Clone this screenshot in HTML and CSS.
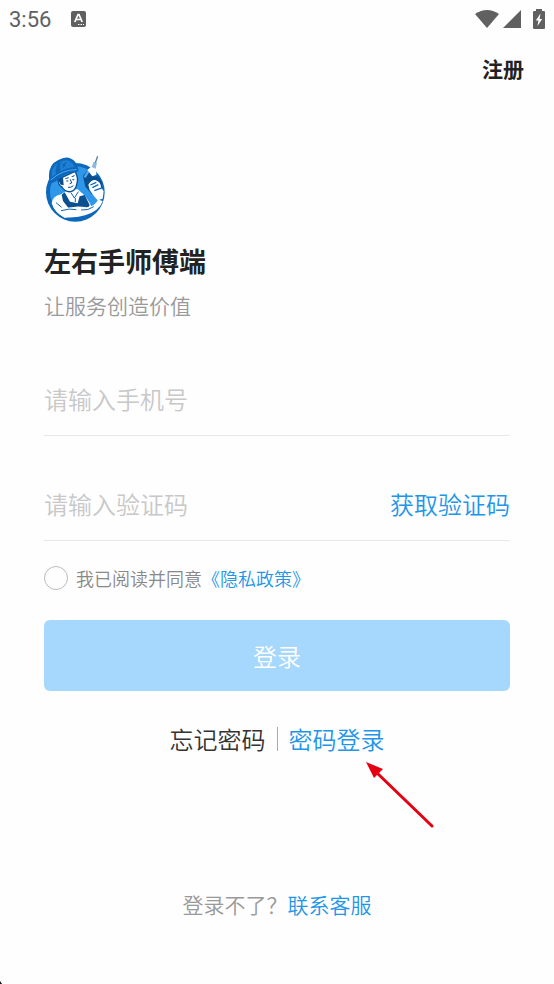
FILE: index.html
```html
<!DOCTYPE html>
<html lang="zh-CN">

<head>
    <meta charset="UTF-8">
    <meta name="viewport" content="width=device-width, initial-scale=1.0">
    <title>登录</title>
    <link rel="stylesheet" href="styles.css">
</head>

<body>
    <div class="status-bar">
        <span class="time">3:56</span>
        <svg class="app-icon" width="15" height="16" viewBox="0 0 15 16">
            <rect width="15" height="16" rx="2" fill="#606060" />
            <path d="M3.8 11 L7 3.6 H8 L11.2 11 M5.2 8.5 H9.8" fill="none" stroke="#fff" stroke-width="1.7" />
            <path d="M7 13.5 H8.5 M9.5 13.5 H11 M12 13.5 H13" stroke="#fff" stroke-width="1.2" />
        </svg>
        <div class="status-icons">
            <svg width="24" height="18" viewBox="0 0 24 18">
                <path d="M0 4 Q12 -4 24 4 L12 18 Z" fill="#606060" />
            </svg>
            <svg width="18" height="18" viewBox="0 0 18 18">
                <path d="M18 0 V18 H0 Z" fill="#606060" />
            </svg>
            <svg class="battery" width="12" height="20" viewBox="0 0 12 20">
                <path d="M3 2 V0 H9 V2 H11 Q12 2 12 3 V19 Q12 20 11 20 H1 Q0 20 0 19 V3 Q0 2 1 2 Z" fill="#606060" />
                <path d="M7.5 4.5 L2.8 11.5 H5.4 L4.5 17 L9.2 10 H6.6 Z" fill="#fff" />
            </svg>
        </div>
    </div>

    <header class="top">
        <a class="register" href="#">注册</a>
    </header>

    <main class="login">
        <svg class="logo" width="62" height="66" viewBox="27 18 186 198" role="img" aria-label="左右手师傅端">
            <circle cx="121" cy="127" r="88" fill="#0d68bb" />
            <circle cx="121" cy="125" r="76" fill="#2f97ea" />
            <!-- 身体 -->
            <path d="M50 160 Q52 139 78 133 L98 120 L128 118 L150 137 L164 158 L172 176 L130 184 L90 204 Q58 188 50 160 Z" fill="#fff" />
            <path d="M80 134 L89 127 L105 155 L128 160 L134 139 L149 135 L164 165 L157 178 L108 184 L84 153 Z" fill="#0a4f8f" />
            <path d="M76 180 Q115 164 155 172 Q180 170 190 148 L203 154 Q192 184 150 196 Q112 206 84 201 Z" fill="#fff" />
            <path d="M78 182 Q104 174 124 179 M138 180 Q160 182 176 170 M63 158 L80 172 M108 128 L118 144 L130 125 M121 144 V156" fill="none" stroke="#0d68bb" stroke-width="3" />
            <!-- 头部 -->
            <path d="M69 88 L120 64 Q132 84 125 104 Q121 122 107 125 Q90 127 81 111 Q70 108 69 88 Z" fill="#fff" stroke="#0a4f8f" stroke-width="4" />
            <path d="M68 87 L84 82 L86 106 L77 104 Z" fill="#0a4f8f" />
            <path d="M91 86 L101 83 M110 80 L119 77 M94 93 H100 M112 89 H118 M106 88 L110 99 L104 101 M99 112 Q108 114 115 107" fill="none" stroke="#0a4f8f" stroke-width="3" />
            <path d="M43 94 Q36 45 70 30 Q100 12 121 36 L128 52 Q136 67 121 67 Q100 66 68 89 Q48 106 43 94 Z" fill="#0d68bb" />
            <path d="M50 80 Q48 52 68 38 Q60 58 63 73 Z M76 36 Q98 24 112 40 L119 52 Q98 52 76 64 Z" fill="#1d80d4" />
            <path d="M47 90 Q83 58 125 59" fill="none" stroke="#4fa8f2" stroke-width="3" />
            <path d="M82 41 L92 49 M93 36 L83 53" stroke="#0d5ca6" stroke-width="3" />
            <!-- 电钻 -->
            <path d="M144 78 L160 56 L174 78 L190 80 L202 100 L199 116 L170 132 L151 110 Z" fill="#0a4f8f" />
            <path d="M146 80 L158 60 L163 66 L152 84 Z" fill="#4fa8f2" />
            <path d="M157 60 L170 49 L184 58 L184 74 L172 79 Z" fill="#fff" />
            <path d="M170 51 L176 35 L186 38 L182 56 Z" fill="#8fb9de" />
            <path d="M181 38 L188 19" stroke="#5b7f9f" stroke-width="4" />
            <path d="M160 104 Q168 89 181 90 Q198 96 198 112 L206 124 L203 146 L188 151 L176 137 L164 120 Z" fill="#fff" />
            <path d="M166 105 L184 97 M172 113 L190 104 M178 122 L203 113" stroke="#0d68bb" stroke-width="4" />
        </svg>
        <h1 class="title">左右手师傅端</h1>
        <p class="slogan">让服务创造价值</p>

        <form class="form">
            <div class="field">
                <input type="tel" placeholder="请输入手机号" aria-label="手机号">
            </div>
            <div class="field">
                <input type="text" placeholder="请输入验证码" aria-label="验证码">
                <button class="get-code" type="button">获取验证码</button>
            </div>
            <div class="agree">
                <input type="checkbox" id="agree">
                <label for="agree">我已阅读并同意</label>
                <a href="#">《隐私政策》</a>
            </div>
            <button class="submit" type="submit">登录</button>
        </form>

        <div class="links">
            <a class="forgot" href="#">忘记密码</a>
            <span class="divider"></span>
            <a class="password-login" href="#">密码登录</a>
            <svg class="arrow" width="70" height="68" viewBox="0 0 70 68">
                <path d="M10 10 L66 64" stroke="#e60012" stroke-width="3" stroke-linecap="round" />
                <path d="M0 0 L17 7 L8 16 Z" fill="#e60012" />
            </svg>
        </div>
    </main>

    <footer class="help">
        <span>登录不了？</span><a href="#">联系客服</a>
    </footer>
    <svg class="corner" width="2" height="3" viewBox="0 0 2 3">
        <path d="M0 0 L2 3 H0 Z" fill="#111" />
    </svg>
</body>

</html>
```

FILE: styles.css
```css
* {
    margin: 0;
    padding: 0;
    box-sizing: border-box;
}

body {
    background-color: #fefefe;
    color: #222;
    font-family: "Noto Sans CJK SC", sans-serif;
    font-weight: 350;
}

a {
    color: #2196e8;
    text-decoration: none;
}

input,
button {
    border: none;
    outline: none;
    background: none;
    font-family: inherit;
    font-weight: inherit;
}

svg {
    display: block;
}

.status-bar {
    display: flex;
    align-items: center;
    height: 38px;
    padding: 0 9px;
}

.time {
    color: #606060;
    font-family: Roboto, sans-serif;
    font-size: 22px;
    font-weight: 400;
}

.app-icon {
    margin-left: 20px;
}

.status-icons {
    display: flex;
    align-items: center;
    gap: 4px;
    margin-left: auto;
}

.battery {
    margin-left: 8px;
}

.top {
    display: flex;
    justify-content: flex-end;
    padding: 14px 30px 0;
}

.register {
    color: #222;
    font-size: 21px;
    font-weight: 700;
    line-height: 32px;
}

.login {
    padding: 72px 44px 0;
}

.title {
    margin-top: 21px;
    font-size: 27px;
    font-weight: 700;
    line-height: 36px;
}

.slogan {
    margin-top: 12px;
    color: #999;
    font-size: 21px;
    line-height: 28px;
}

.form {
    display: flex;
    flex-direction: column;
    margin-top: 45px;
}

.field {
    display: flex;
    align-items: center;
    height: 72px;
    padding-bottom: 3px;
    border-bottom: 1px solid #e8e8e8;
}

.field + .field {
    margin-top: 33px;
}

.field input {
    flex: 1;
    min-width: 0;
    height: 100%;
    color: #222;
    font-size: 24px;
}

.field input::placeholder {
    color: #c8c8c8;
}

.get-code {
    color: #2196e8;
    font-size: 24px;
}

.agree {
    display: flex;
    align-items: center;
    margin-top: 25px;
    color: #888;
    font-size: 18px;
    line-height: 24px;
}

.agree input {
    appearance: none;
    width: 24px;
    height: 24px;
    margin-right: 8px;
    border: 1px solid #bbb;
    border-radius: 50%;
}

.agree input:checked {
    background-color: #2196e8;
}

.submit {
    height: 71px;
    margin-top: 30px;
    border-radius: 6px;
    background-color: #a6d7fc;
    color: #fff;
    font-size: 24px;
}

.links {
    position: relative;
    display: flex;
    justify-content: center;
    align-items: center;
    gap: 11px;
    margin-top: 32px;
    font-size: 24px;
    line-height: 32px;
}

.forgot {
    color: #333;
}

.divider {
    width: 1px;
    height: 24px;
    background-color: #aaa;
}

.arrow {
    position: absolute;
    top: 39px;
    left: calc(50% + 89px);
}

.help {
    display: flex;
    justify-content: center;
    margin-top: 135px;
    color: #999;
    font-size: 21px;
    line-height: 28px;
}

.corner {
    position: fixed;
    left: 0;
    bottom: 0;
}
```
